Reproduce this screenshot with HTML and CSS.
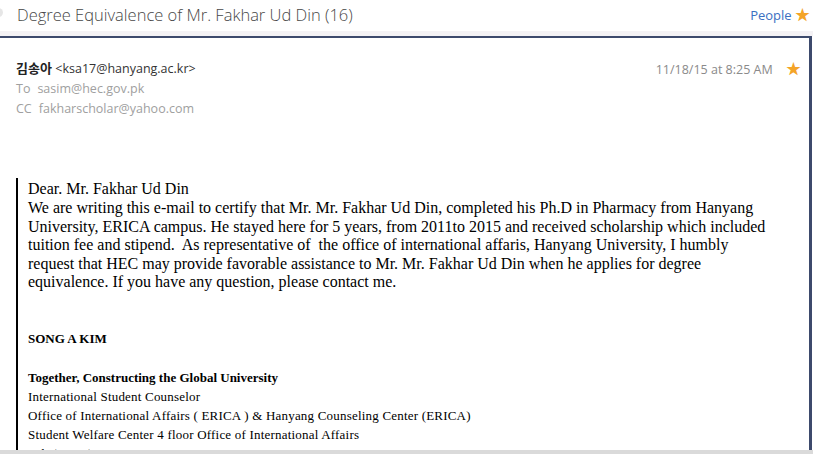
FILE: index.html
```html
<!DOCTYPE html>
<html>
<head>
<meta charset="utf-8">
<link rel="stylesheet" href="styles.css">
</head>
<body>
<div class="page">
  <div class="topbar">
    <span class="dot"></span>
    <h1 class="title">Degree Equivalence of Mr. Fakhar Ud Din (16)</h1>
    <div class="people">People <span class="star">★</span></div>
  </div>
  <div class="band"></div>
  <div class="frame">
    <div class="msghead">
      <div class="addr">
        <div class="from"><span class="name">김송아</span> <span class="email">&lt;ksa17@hanyang.ac.kr&gt;</span></div>
        <div class="line"><span class="lbl">To</span>sasim@hec.gov.pk</div>
        <div class="line"><span class="lbl">CC</span>fakharscholar@yahoo.com</div>
      </div>
      <div class="when">11/18/15 at 8:25 AM <span class="star">★</span></div>
    </div>
    <div class="quote">
      <p class="greet">Dear. Mr. Fakhar Ud Din</p>
      <p class="text">We are writing this e-mail to certify that Mr. Mr. Fakhar Ud Din, completed his Ph.D in Pharmacy from Hanyang<br>University, ERICA campus. He stayed here for 5 years, from 2011to 2015 and received scholarship which included<br>tuition fee and stipend.&nbsp; As representative of&nbsp; the office of international affaris, Hanyang University, I humbly<br>request that HEC may provide favorable assistance to Mr. Mr. Fakhar Ud Din when he applies for degree<br>equivalence. If you have any question, please contact me.</p>
      <div class="sig">
        <p class="b">SONG A KIM</p>
        <p class="b gap">Together, Constructing the Global University</p>
        <p>International Student Counselor</p>
        <p>Office of International Affairs ( ERICA ) &amp; Hanyang Counseling Center (ERICA)</p>
        <p>Student Welfare Center 4 floor Office of International Affairs</p>
        <p>Tel: (82-31) 400-4217</p>
      </div>
    </div>
  </div>
  <div class="hscroll"></div>
</div>
</body>
</html>
```
FILE: styles.css
```css
html, body {
  margin: 0;
  padding: 0;
  background: #ffffff;
  overflow: hidden;
}
.page {
  width: 813px;
  height: 454px;
  position: relative;
  overflow: hidden;
  font-family: "Open Sans", "Noto Sans", "Noto Sans CJK KR", sans-serif;
}
.topbar {
  height: 31px;
  display: flex;
  align-items: center;
  padding-left: 17px;
  padding-right: 3px;
  box-sizing: border-box;
}
.dot {
  position: absolute;
  left: -6px;
  top: 8px;
  width: 9px;
  height: 9px;
  border-radius: 50%;
  background: #e6e6e6;
}
.title {
  margin: 0;
  font-family: "Open Sans", sans-serif;
  font-size: 16.5px;
  font-weight: 300;
  color: #474747;
  flex: 1;
  margin-top: -3px;
}
.people {
  font-size: 13px;
  color: #3a70c2;
  margin-top: -4px;
}
.star {
  color: #f4a428;
  font-size: 15px;
}
.band {
  height: 5px;
  background: #f4f2f5;
}
.frame {
  border-top: 2px solid #3d4a6c;
  border-right: 3px solid #3d4a6c;
  height: 420px;
  margin-right: 1px;
  box-sizing: border-box;
}
.msghead {
  display: flex;
  justify-content: space-between;
  padding: 20px 8px 0 16px;
  height: 140px;
  box-sizing: border-box;
}
.from {
  font-size: 13px;
  color: #222;
  line-height: 20px;
}
.name {
  font-weight: 700;
  font-family: "Noto Sans CJK KR", sans-serif;
}
.email {
  font-size: 12.5px;
  color: #333;
}
.line {
  font-size: 12.5px;
  color: #a0a0a0;
  line-height: 20px;
}
.lbl {
  margin-right: 7px;
}
.when {
  font-size: 12.5px;
  color: #8a8a8a;
  line-height: 20px;
}
.when .star {
  margin-left: 10px;
}
.quote {
  margin-left: 16px;
  border-left: 2px solid #000;
  padding-left: 10px;
  font-family: "Liberation Serif", "Times New Roman", serif;
  color: #000;
  padding-top: 1px;
}
.greet {
  margin: 0 0 1px;
  font-size: 16px;
  line-height: 19px;
}
.text {
  margin: 0;
  font-size: 16px;
  line-height: 18.5px;
}
.sig {
  padding-top: 37px;
  font-size: 13px;
}
.sig p {
  margin: 0;
  line-height: 19px;
  letter-spacing: 0.2px;
}
.sig .b {
  font-weight: 700;
  letter-spacing: 0;
}
.sig .gap {
  margin-top: 20px;
}
.hscroll {
  position: absolute;
  left: 0;
  right: 0;
  bottom: 0;
  height: 4px;
  background: #dadada;
}
```
